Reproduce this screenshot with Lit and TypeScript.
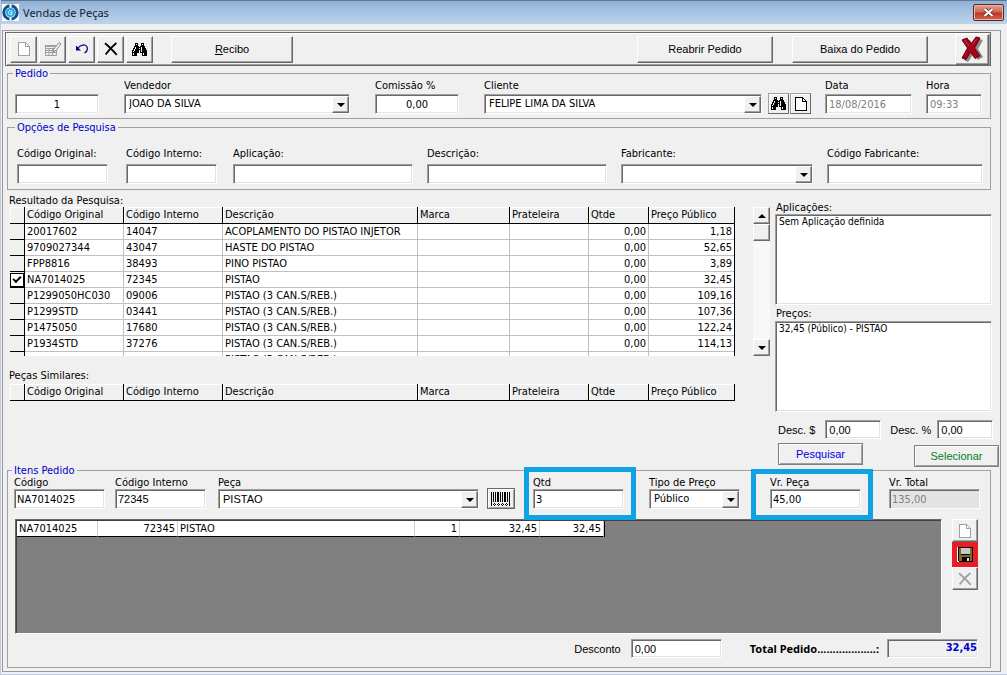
import { LitElement, html, css, svg, nothing } from "lit";
import { customElement, state } from "lit/decorators.js";

interface Part {
  original: string;
  internal: string;
  description: string;
  qty: string;
  price: string;
}

const PARTS: Part[] = [
  { original: "20017602", internal: "14047", description: "ACOPLAMENTO DO PISTAO INJETOR", qty: "0,00", price: "1,18" },
  { original: "9709027344", internal: "43047", description: "HASTE DO PISTAO", qty: "0,00", price: "52,65" },
  { original: "FPP8816", internal: "38493", description: "PINO PISTAO", qty: "0,00", price: "3,89" },
  { original: "NA7014025", internal: "72345", description: "PISTAO", qty: "0,00", price: "32,45" },
  { original: "P1299050HC030", internal: "09006", description: "PISTAO (3 CAN.S/REB.)", qty: "0,00", price: "109,16" },
  { original: "P1299STD", internal: "03441", description: "PISTAO (3 CAN.S/REB.)", qty: "0,00", price: "107,36" },
  { original: "P1475050", internal: "17680", description: "PISTAO (3 CAN.S/REB.)", qty: "0,00", price: "122,24" },
  { original: "P1934STD", internal: "37276", description: "PISTAO (3 CAN.S/REB.)", qty: "0,00", price: "114,13" },
];

const COLUMNS = ["Código Original", "Código Interno", "Descrição", "Marca", "Prateleira", "Qtde", "Preço Público"];

const BINOCULARS = [
  "...XXX...XXX...",
  "...X.X...X.X...",
  "...XXX...XXX...",
  "..XXXXX.XXXXX..",
  "..X.XXXXX.XXX..",
  ".XX.XXX.X.XXXX.",
  ".X.XXXXXX.XXXX.",
  "XX.XXXX.X.XXXXX",
  "X.XXXXX.X.XXXXX",
  "XXXXXXX.XXXXXXX",
  "X.XXX.....X.XXX",
  "X.XXX.....X.XXX",
  "XXXXX.....XXXXX",
];

/* Turns rows of X marks into one path of unit squares. */
const bitmapPath = (rows: string[]) =>
  rows.map((row, y) => [...row].map((c, x) => (c === "X" ? `M${x} ${y}h1v1h-1z` : "")).join("")).join("");

const pageIcon = (stroke: string) => html`<svg width="12" height="14" viewBox="0 0 12 14" shape-rendering="crispEdges" aria-hidden="true">
  <path d="M0.5 0.5H7.5L11.5 4.5V13.5H0.5Z" fill="#fff" stroke=${stroke} />
  <path d="M7.5 0.5V4.5H11.5" fill="none" stroke=${stroke} />
</svg>`;

const binocularsIcon = html`<svg width="15" height="13" viewBox="0 0 15 13" shape-rendering="crispEdges" aria-hidden="true">
  <path d=${bitmapPath(BINOCULARS)} fill="#000" />
</svg>`;

const crossIcon = (stroke: string) => html`<svg width="14" height="14" viewBox="0 0 14 14" aria-hidden="true">
  <path d="M1 1.2C4 3.6 9 8.6 12.8 12.8M12.4 1C8.6 4 4.4 8.6 1.6 12.6" fill="none" stroke=${stroke} stroke-width="1.8" />
</svg>`;

const editIcon = html`<svg width="18" height="16" viewBox="0 0 18 16" aria-hidden="true">
  <path d="M1.5 4.500H12.500V14.500H1.500ZM1.500 7.500H12.500M1.500 9.500H12M1.500 11.500H12M5 7V14M8.500 7V14" fill="none" stroke="#a0a0a0" />
  <path d="M1 4h10v2H1z" fill="#a0a0a0" />
  <path d="M9 11L10 8L15 1.500L17 3L12 9.500Z" fill="#f0f0f0" stroke="#8c8c8c" />
</svg>`;

const undoIcon = html`<svg width="14" height="12" viewBox="0 0 14 12" aria-hidden="true">
  <path d="M2.500 5.500C5.500 1.500 10 1 11.800 3.500C13 6 12 8.500 9.500 10" fill="none" stroke="#00007c" stroke-width="1.200" />
  <path d="M1 2.500V7.500H6Z" fill="#00007c" />
</svg>`;

const exitIcon = html`<svg width="24" height="26" viewBox="0 0 24 26" aria-hidden="true">
  <path d="M5 5L10 4L14 9L19 3L23 4L18 13L23 21L18 24L13.500 18L8 26L4 24L10 14Z" fill="#8a8a8a" />
  <path d="M2 4L7 2L11 8L16 1L20 2L14.500 12L20 20L15 22.500L10.500 16L6 23.500L2 22L7.500 12Z" fill="#ae0014" stroke="#600010" stroke-width="1" />
  <path d="M4.500 4L9 10M16.500 3L13 8" stroke="#d83048" stroke-width="1" fill="none" />
</svg>`;

const appIcon = html`<svg width="17" height="17" viewBox="0 0 17 17" aria-hidden="true">
  <rect width="17" height="17" fill="#fff" />
  <circle cx="8.500" cy="8.500" r="6.700" fill="none" stroke="#12508a" stroke-width="3" />
  <path d="M8.500 0V3.500M8.500 13.500V17" stroke="#fff" stroke-width="2" />
  <circle cx="8.500" cy="8.500" r="4.600" fill="#2aa4dd" />
  <path d="M10.500 10.500C6.500 11.500 5.500 8.500 7 7C9 5.500 11 7.500 10 9.200C8.500 9.800 8 8.500 8.800 7.600" stroke="#d8f3ff" fill="none" />
</svg>`;

const floppyIcon = html`<svg width="15" height="15" viewBox="0 0 15 15" shape-rendering="crispEdges" aria-hidden="true">
  <path d="M0 0H15V15H1L0 14Z" fill="#000" />
  <path d="M1 1H3V8H12V1H14V14H12V10H4V14H1Z" fill="#7a6a2c" />
  <path d="M3 1H12V7H3Z" fill="#c8c8c8" />
  <path d="M9 11H11V14H9Z" fill="#e4e4e4" />
</svg>`;

const barcodeIcon = html`<svg width="20" height="14" viewBox="0 0 20 14" shape-rendering="crispEdges" aria-hidden="true">
  <path d="M0 0h1v14h-1zM2 0h1v10h-1zM4 0h1v10h-1zM6 0h2v10h-2zM9 0h1v10h-1zM11 0h1v10h-1zM13 0h2v10h-2zM16 0h1v10h-1zM18 0h1v14h-1z" fill="#000" />
  ${[2, 6, 10, 14].map((x) => svg`<path d=${`M${x + 1} 11h1v1h-1zM${x} 12h1v1h-1zM${x + 2} 12h1v1h-1zM${x + 1} 13h1v1h-1z`} fill="#000" />`)}
</svg>`;

const arrow = (up = false) => html`<svg width="8" height="4" viewBox="0 0 8 4" aria-hidden="true">
  <path d=${up ? "M4 0L8 4H0Z" : "M0 0H8L4 4Z"} fill="#000" />
</svg>`;

@customElement("app-root")
export class AppRoot extends LitElement {
  @state() private selected = 3;

  static styles = css`
    :host {
      display: flex;
      flex-direction: column;
      min-height: 100vh;
      box-sizing: border-box;
      background: #f0f0f0;
      border-bottom: 1px solid #b9cde5;
      border-left: 1px solid #b9cde5;
      color: #000;
      font: 11px/12px "DejaVu Sans Condensed", Tahoma, sans-serif;
    }
    *, *::before { box-sizing: border-box; }
    svg { display: block; flex: none; }
    button, input, select, textarea { font: inherit; color: inherit; margin: 0; border-radius: 0; min-width: 0; }
    .titlebar {
      display: flex;
      align-items: center;
      gap: 4px;
      height: 24px;
      padding: 0 3px 0 1px;
      background: linear-gradient(#8fb0d4, #a3c0e0 40%, #bdd3eb);
      border-top: 1px solid #5d7893;
    }
    h1 { flex: 1; margin: 0; font: 11px/16px "Noto Sans", sans-serif; color: #10202f; }
    .close {
      display: grid;
      place-items: center;
      width: 31px;
      height: 17px;
      padding: 0;
      border: 1px solid #5a2a2a;
      border-radius: 2px;
      background: linear-gradient(#e3a095, #d0664f 48%, #b93620 52%, #d2664c);
      box-shadow: inset 0 0 0 1px #e9b3a8;
    }
    .panel {
      flex: 1;
      display: flex;
      flex-direction: column;
      margin: 6px 6px 2px 1px;
      padding: 1px 9px 3px 2px;
      border: 1px solid #9a9a9a;
    }
    .toolbar {
      display: flex;
      align-items: center;
      gap: 2px;
      height: 34px;
      padding: 0 1px 0 4px;
      border: 1px solid #696969;
      box-shadow: inset 1px 1px #fff, inset -1px -1px #a0a0a0;
    }
    .btn {
      display: flex;
      align-items: center;
      justify-content: center;
      padding: 0;
      background: #f0f0f0;
      border: 1px solid;
      border-color: #fff #696969 #696969 #fff;
      box-shadow: inset -1px -1px #a0a0a0;
      font-family: "Liberation Sans", Arial, sans-serif;
      font-size: 11px;
    }
    .tool { width: 27px; height: 27px; }
    .wide { width: 122px; height: 27px; margin-left: 16px; }
    .push { margin-left: auto; }
    .order { width: 136px; height: 27px; }
    .order + .order { margin-left: 17px; }
    .exit { width: 34px; height: 31px; margin-left: 25px; }
    fieldset {
      min-width: 0;
      margin: 1px 0 0 2px;
      padding: 0 8px 4px 7px;
      border: 1px solid #a0a0a0;
    }
    legend { padding: 0 2px; margin-left: -2px; line-height: 13px; color: #0000c8; }
    .row { display: flex; align-items: flex-end; }
    .search { margin-top: 2px; padding: 14px 7px 5px 9px; }
    .items { display: flex; flex-direction: column; flex: 1; margin-top: 0; padding: 0 10px 8px 6px; }
    .field { display: flex; flex-direction: column; gap: 2px; flex: none; position: relative; }
    .search .field { gap: 4px; }
    .items .field { gap: 0; }
    label { white-space: nowrap; }
    .box {
      height: 20px;
      padding: 0 3px;
      background: #fff;
      border: 1px solid;
      border-color: #a0a0a0 #fff #fff #a0a0a0;
      box-shadow: inset 1px 1px #696969, inset -1px -1px #e3e3e3;
      outline: none;
    }
    .field input.box, .combo select.box { width: 100%; }
    .items .field input.box { padding: 0 2px; }
    .center { text-align: center; }
    .muted { color: #808080; }
    .off { background: #e4e4e4; color: #808080; }
    .combo { position: relative; display: block; }
    .combo select { appearance: none; padding-left: 4px; padding-right: 18px; display: block; }
    .drop {
      position: absolute;
      top: 2px;
      right: 1px;
      width: 17px;
      height: 17px;
      pointer-events: none;
    }
    .w56 { width: 56px; }
    .w84 { width: 84px; }
    .w87 { width: 87px; }
    .w91 { width: 91px; }
    .w156 { width: 156px; }
    .w192 { width: 192px; }
    .w226 { width: 226px; }
    .grow { flex: 1 1 0; min-width: 0; }
    .g1 { margin-left: 1px; }
    .g6 { margin-left: 6px; }
    .g8 { margin-left: 8px; }
    .g10 { margin-left: 10px; }
    .g12 { margin-left: 12px; }
    .g14 { margin-left: 14px; }
    .g16 { margin-left: 16px; }
    .g18 { margin-left: 18px; }
    .g25 { margin-left: 25px; }
    .g28 { margin-left: 28px; }
    .g30 { margin-left: 30px; }
    .mini { width: 21px; height: 21px; border-color: #a0a0a0 #696969 #696969 #a0a0a0; box-shadow: inset 1px 1px #fff; }
    .bar { width: 28px; height: 21px; border-color: #696969; box-shadow: inset 1px 1px #fff, inset -1px -1px #a0a0a0; }
    .sans { font-family: "Liberation Sans", Arial, sans-serif; font-size: 11px; }
    .mark::before {
      content: "";
      position: absolute;
      inset: -10px -12px -11px -9px;
      border: 5px solid #10a3e4;
      pointer-events: none;
    }
    .mark.even::before { inset: -8px -12px -11px -19px; }
    .results { display: flex; align-items: flex-start; }
    .lists { flex: 1; min-width: 0; padding: 4px 0 0 4px; }
    .caption { display: block; line-height: 13px; }
    .viewport { display: flex; height: 149px; }
    .clip { flex: 1; min-width: 0; overflow: hidden; }
    .gap { margin-top: 13px; margin-bottom: 2px; }
    .similar { margin-right: 40px; }
    table { width: 100%; border-collapse: separate; border-spacing: 0; table-layout: fixed; }
    th, td { height: 16px; padding: 0 2px; font-weight: normal; text-align: left; white-space: nowrap; overflow: hidden; line-height: 14px; }
    .grid { border-right: 1px solid #000; margin-left: 1px; width: calc(100% - 1px); }
    .grid th { border-bottom: 1px solid #000; border-right: 1px solid #000; box-shadow: inset 1px 1px #fff; height: 17px; }
    .grid th:last-child { border-right: 0; }
    .grid td { background: #fff; border-right: 1px solid #c0c0c0; border-bottom: 1px solid #c0c0c0; }
    .grid td:first-child { padding: 0; background: #f0f0f0; border-right: 1px solid #000; border-bottom: 1px solid #000; }
    .grid td:last-child { border-right: 0; }
    .c-sel { width: 15px; }
    .c-code { width: 99px; }
    .c-brand { width: 92px; }
    .c-shelf { width: 79px; }
    .c-qty { width: 60px; }
    .c-price { width: 85px; }
    .num, .grid td.num { text-align: right; }
    .tick {
      appearance: none;
      display: block;
      width: 14px;
      height: 14px;
      border: 1px solid #000;
      background: #fff;
    }
    .tick::before {
      content: "";
      display: block;
      width: 8px;
      height: 5px;
      margin: 2px 0 0 2px;
      border: solid #000;
      border-width: 0 0 2px 2px;
      transform: rotate(-45deg);
    }
    .scroll {
      display: flex;
      flex-direction: column;
      width: 17px;
      margin: 0 5px 0 18px;
      background: #f8f8f8;
    }
    .scroll .btn { height: 17px; }
    .scroll .last { margin-top: auto; }
    .side { flex: none; width: 224px; margin-right: -8px; padding-top: 12px; margin-bottom: -3px; }
    .side label { display: block; padding-left: 1px; }
    textarea { display: block; width: 217px; resize: none; }
    .side textarea.box { height: 91px; padding: 0 3px; font-size: 10px; line-height: 14px; }
    .side .prices { margin-top: 3px; padding-bottom: 1px; }
    .discount { display: flex; align-items: center; margin-top: 8px; padding-left: 2px; }
    .discount .box, .foot .box { height: 19px; }
    .actions { display: flex; justify-content: space-between; align-items: flex-start; margin-top: 4px; padding-left: 3px; }
    .action { width: 85px; height: 22px; border-color: #808080; box-shadow: inset 1px 1px #fff, inset -1px -1px #a0a0a0; }
    .blue { color: #0000e0; }
    .green { color: #00801e; margin-top: 2px; }
    .stage { display: flex; flex: 1; gap: 10px; margin-top: 10px; padding: 0 2px 0 1px; }
    .sheet { flex: 1; min-height: 115px; background: #808080; border: 1px solid; border-color: #696969 #fff #fff #696969; box-shadow: inset 1px 1px #404040; padding: 1px; }
    .sheet table { width: 588px; background: #fff; border-right: 1px solid #000; }
    .sheet td { border-right: 1px solid #d0d0d0; border-bottom: 1px solid #000; }
    .c-i1 { width: 81px; }
    .c-i2 { width: 80px; }
    .c-i4 { width: 45px; }
    .c-i5 { width: 80px; }
    .c-i6 { width: 64px; }
    .stack { display: flex; flex-direction: column; width: 26px; }
    .stack .btn { height: 23px; }
    .stack .save { height: 25px; border: 5px solid #ec1c24; box-shadow: none; background: #fff; }
    .foot { display: flex; align-items: center; justify-content: flex-end; margin-top: 4px; height: 21px; padding-right: 2px; }
    .total { white-space: nowrap; font: bold 11px/14px "Noto Sans", sans-serif; }
    .sum { display: block; width: 91px; background: #f0f0f0; color: #0000d0; font-weight: bold; text-align: right; padding: 2px 0 0; }
  `;

  private head() {
    return html`<colgroup>
        <col class="c-sel" /><col class="c-code" /><col class="c-code" /><col />
        <col class="c-brand" /><col class="c-shelf" /><col class="c-qty" /><col class="c-price" />
      </colgroup>
      <thead>
        <tr><th></th>${COLUMNS.map((c) => html`<th scope="col">${c}</th>`)}</tr>
      </thead>`;
  }

  private field(id: string, label: string, value: string, cls: string, boxCls = "") {
    return html`<div class="field ${cls}">
      ${label ? html`<label for=${id}>${label}</label>` : nothing}
      <input id=${id} class="box ${boxCls}" .value=${value} aria-label=${label || "Número do pedido"} />
    </div>`;
  }

  private combo(id: string, label: string, value: string, cls: string, boxCls = "") {
    return html`<div class="field ${cls}">
      <label for=${id}>${label}</label>
      <span class="combo">
        <select id=${id} class="box ${boxCls}"><option>${value}</option></select>
        <span class="btn drop">${arrow()}</span>
      </span>
    </div>`;
  }

  render() {
    return html`
      <header class="titlebar">
        ${appIcon}
        <h1>Vendas de Peças</h1>
        <button class="close" aria-label="Fechar">
          <svg width="11" height="9" viewBox="0 0 11 9"><path d="M1.500 1L9.500 8M9.500 1L1.500 8" stroke="#5a3030" stroke-width="3.600" /><path d="M1.500 1L9.500 8M9.500 1L1.500 8" stroke="#fff" stroke-width="2.200" /></svg>
        </button>
      </header>
      <main class="panel">
        <div class="toolbar">
          <button class="btn tool" aria-label="Novo">${pageIcon("#a0a0a0")}</button>
          <button class="btn tool" aria-label="Editar">${editIcon}</button>
          <button class="btn tool" aria-label="Desfazer">${undoIcon}</button>
          <button class="btn tool" aria-label="Excluir">${crossIcon("#000")}</button>
          <button class="btn tool" aria-label="Localizar">${binocularsIcon}</button>
          <button class="btn wide"><span><u>R</u>ecibo</span></button>
          <button class="btn order push">Reabrir Pedido</button>
          <button class="btn order">Baixa do Pedido</button>
          <button class="btn exit" aria-label="Sair">${exitIcon}</button>
        </div>

        <fieldset>
          <legend>Pedido</legend>
          <div class="row">
            ${this.field("numero", "", "1", "w84", "center")}
            ${this.combo("vendedor", "Vendedor", "JOÃO DA SILVA", "w226 g25")}
            ${this.field("comissao", "Comissão %", "0,00", "w84 g25", "center")}
            ${this.combo("cliente", "Cliente", "FELIPE LIMA DA SILVA", "grow g25")}
            <button class="btn mini g6" aria-label="Localizar cliente">${binocularsIcon}</button>
            <button class="btn mini g1" aria-label="Novo cliente">${pageIcon("#000")}</button>
            ${this.field("data", "Data", "18/08/2016", "w87 g14", "muted")}
            ${this.field("hora", "Hora", "09:33", "w56 g14", "muted")}
          </div>
        </fieldset>

        <fieldset class="search">
          <legend>Opções de Pesquisa</legend>
          <div class="row">
            ${this.field("p-original", "Código Original:", "", "w91")}
            ${this.field("p-interno", "Código Interno:", "", "w91 g18")}
            ${this.field("p-aplicacao", "Aplicação:", "", "grow g16")}
            ${this.field("p-descricao", "Descrição:", "", "grow g14")}
            ${this.combo("p-fabricante", "Fabricante:", "", "w192 g14")}
            ${this.field("p-codfab", "Código Fabricante:", "", "w156 g14")}
          </div>
        </fieldset>

        <section class="results">
          <div class="lists">
            <span class="caption">Resultado da Pesquisa:</span>
            <div class="viewport">
              <div class="clip">
                <table class="grid">
                  ${this.head()}
                  <tbody>
                    ${PARTS.map(
                      (p, i) => html`<tr @click=${() => (this.selected = i)}>
                        <td>${i === this.selected ? html`<input type="checkbox" class="tick" aria-label="Selecionado" checked />` : nothing}</td>
                        <td>${p.original}</td>
                        <td>${p.internal}</td>
                        <td>${p.description}</td>
                        <td></td>
                        <td></td>
                        <td class="num">${p.qty}</td>
                        <td class="num">${p.price}</td>
                      </tr>`
                    )}
                    <tr><td></td><td></td><td></td><td>PISTAO (3 CAN.S/REB.)</td><td></td><td></td><td></td><td></td></tr>
                  </tbody>
                </table>
              </div>
              <div class="scroll">
                <button class="btn" aria-label="Subir">${arrow(true)}</button>
                <span class="btn"></span>
                <button class="btn last" aria-label="Descer">${arrow()}</button>
              </div>
            </div>
            <span class="caption gap">Peças Similares:</span>
            <div class="similar"><table class="grid">${this.head()}</table></div>
          </div>

          <aside class="side">
            <label for="aplicacoes">Aplicações:</label>
            <textarea id="aplicacoes" class="box" readonly .value=${"Sem Aplicação definida"}></textarea>
            <label for="precos" class="prices">Preços:</label>
            <textarea id="precos" class="box" readonly .value=${"32,45 (Público) - PISTAO"}></textarea>
            <div class="discount sans">
              <label for="desc-v">Desc. $</label>
              <input id="desc-v" class="box w56 g10" .value=${"0,00"} />
              <label for="desc-p" class="g8">Desc. %</label>
              <input id="desc-p" class="box w56 g6" .value=${"0,00"} />
            </div>
            <div class="actions">
              <button class="btn action blue">Pesquisar</button>
              <button class="btn action green">Selecionar</button>
            </div>
          </aside>
        </section>

        <fieldset class="items">
          <legend>Itens Pedido</legend>
          <div class="row">
            ${this.field("i-codigo", "Código", "NA7014025", "w91")}
            ${this.field("i-interno", "Código Interno", "72345", "w91 g10", "sans")}
            ${this.combo("i-peca", "Peça", "PISTAO", "grow g12", "sans")}
            <button class="btn bar g8" aria-label="Código de barras">${barcodeIcon}</button>
            ${this.field("i-qtd", "Qtd", "3", "w91 g18 mark")}
            ${this.combo("i-tipo", "Tipo de Preço", "Público", "w91 g25")}
            ${this.field("i-valor", "Vr. Peça", "45,00", "w91 g30 mark even")}
            ${this.field("i-total", "Vr. Total", "135,00", "w91 g28", "off")}
          </div>
          <div class="stage">
            <div class="sheet">
              <table>
                <colgroup>
                  <col class="c-i1" /><col class="c-i2" /><col /><col class="c-i4" /><col class="c-i5" /><col class="c-i6" />
                </colgroup>
                <tbody>
                  <tr>
                    <td>NA7014025</td><td class="num">72345</td><td>PISTAO</td>
                    <td class="num">1</td><td class="num">32,45</td><td class="num">32,45</td>
                  </tr>
                </tbody>
              </table>
            </div>
            <div class="stack">
              <button class="btn" aria-label="Novo item">${pageIcon("#a0a0a0")}</button>
              <button class="btn save" aria-label="Salvar item">${floppyIcon}</button>
              <button class="btn" aria-label="Excluir item">${crossIcon("#a0a0a0")}</button>
            </div>
          </div>
          <div class="foot">
            <label for="desconto" class="sans">Desconto</label>
            <input id="desconto" class="box sans w91 g10" .value=${"0,00"} />
            <span class="total g28">Total Pedido...................:</span>
            <output class="box sum g8">32,45</output>
          </div>
        </fieldset>
      </main>
    `;
  }
}
